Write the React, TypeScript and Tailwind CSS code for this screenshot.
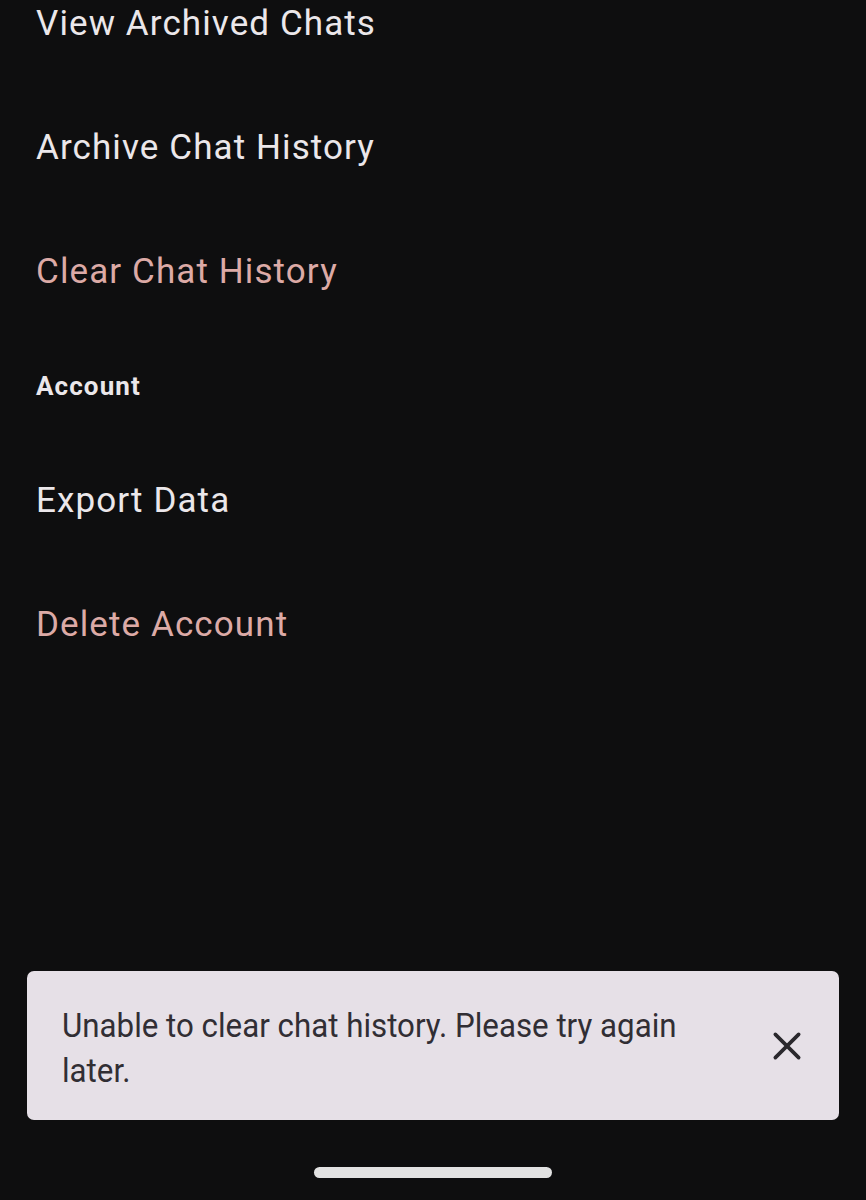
import React from 'react'

interface Item {
  label: string
  danger?: boolean
}

const chatItems: Item[] = [
  { label: 'View Archived Chats' },
  { label: 'Archive Chat History' },
  { label: 'Clear Chat History', danger: true }
]

const accountItems: Item[] = [
  { label: 'Export Data' },
  { label: 'Delete Account', danger: true }
]

const Row: React.FC<Item> = ({ label, danger }) => (
  <div className="h-[124px] flex items-center">
    <span
      className={
        danger
          ? 'text-[35px] tracking-[1.1px] text-[#dcaaa6]'
          : 'text-[35px] tracking-[1.1px] text-[#ebe7ea]'
      }
    >
      {label}
    </span>
  </div>
)

export default function App() {
  return (
    <div
      className="h-[1200px] w-full overflow-hidden bg-[#0e0e0f] flex flex-col"
      style={{ fontFamily: 'Roboto, "Noto Sans", sans-serif' }}
    >
      <div className="pl-[36px] -mt-[38px]">
        {chatItems.map((item) => (
          <Row key={item.label} {...item} />
        ))}
        <div className="h-[105px] flex items-center">
          <span className="text-[26px] font-bold tracking-[1.1px] text-[#ebe7ea]">Account</span>
        </div>
        {accountItems.map((item) => (
          <Row key={item.label} {...item} />
        ))}
      </div>

      <div className="flex-1" />

      <div className="mx-[27px] h-[149px] rounded-[7px] bg-[#e6e0e7] flex items-center pl-[35px] pr-[32px]">
        <div className="w-[635px] pt-[5px]">
          <p className="w-[690px] text-[34px] leading-[45px] text-[#312e34] origin-left scale-x-[0.92]">
            Unable to clear chat history. Please try again later.
          </p>
        </div>
        <svg width="40" height="40" viewBox="0 0 24 24" className="shrink-0 ml-auto">
          <path d="M5 5 L19 19 M19 5 L5 19" stroke="#2a282d" strokeWidth="2.2" strokeLinecap="round" />
        </svg>
      </div>

      <div className="h-[80px] flex justify-center pt-[47px]">
        <div className="w-[238px] h-[11px] rounded-full bg-[#e2e2e2]" />
      </div>
    </div>
  )
}
